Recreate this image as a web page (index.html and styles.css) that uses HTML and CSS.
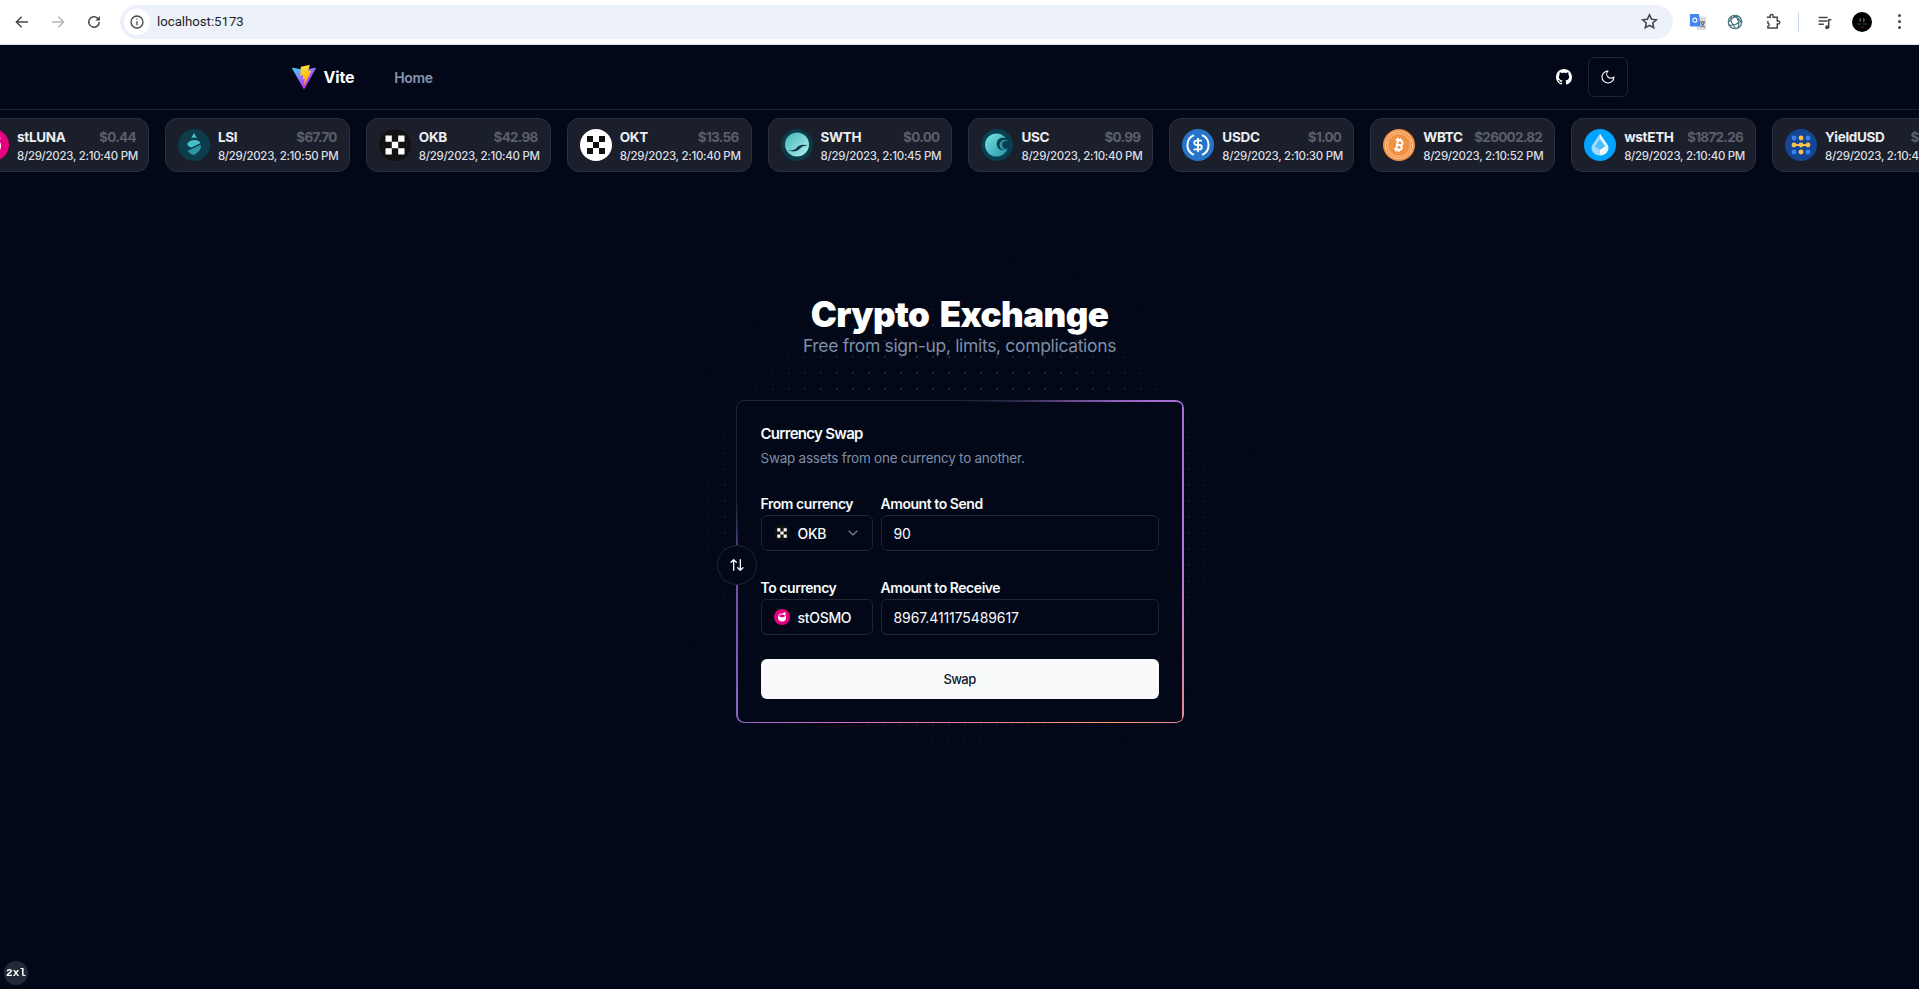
FILE: index.html
```html
<!DOCTYPE html>
<html lang="en">
<head>
<meta charset="utf-8">
<title>Crypto Exchange</title>
<link rel="stylesheet" href="styles.css">
</head>
<body>
<div class="chrome">
  <div class="chrome-btn"><svg class="ci" viewBox="0 0 24 24"><path d="M20 12H5M11.5 5 4.5 12l7 7"/></svg></div>
  <div class="chrome-btn faded"><svg class="ci" viewBox="0 0 24 24"><path d="M4 12h15M12.5 5l7 7-7 7"/></svg></div>
  <div class="chrome-btn"><svg class="ci" viewBox="0 0 24 24"><path d="M19 12a7 7 0 1 1-2.2-5.1L19 9"/><path class="fill" d="M19.8 4v6h-6z"/></svg></div>
  <div class="omnibox">
    <div class="site-info"><svg class="ci small" viewBox="0 0 24 24"><circle cx="12" cy="12" r="9"/><path d="M12 11v6M12 7v1.6"/></svg></div>
    <span class="url">localhost:5173</span>
    <svg class="ci star" viewBox="0 0 24 24"><path d="m12 3.5 2.6 5.6 6 .7-4.5 4.1 1.2 6L12 16.900l-5.300 3 1.200-6-4.500-4.100 6-.7z"/></svg>
  </div>
  <div class="chrome-right">
    <div class="chrome-btn"><svg class="ext" viewBox="0 0 20 20"><path fill="#dadce0" d="M8 4h10a1 1 0 0 1 1 1v13a1 1 0 0 1-1 1H9z"/><path fill="#4285f4" d="M2 1h9l2 14H2a1 1 0 0 1-1-1V2a1 1 0 0 1 1-1z"/><circle cx="6.500" cy="8" r="2.300" fill="none" stroke="#fff" stroke-width="1.200"/><path fill="none" stroke="#5f6368" stroke-width="1.300" d="M12 10h6M15 9v1M13.500 16c2-1.500 3-3.500 3.500-6M13.500 11c.8 2 2 3.500 4 4.500"/></svg></div>
    <div class="chrome-btn"><svg class="ext" viewBox="0 0 20 20" fill="none" stroke="#40717c" stroke-width="1.300"><circle cx="10" cy="10" r="7.500"/><path d="M6 3.500c-1.500 4 .5 9 4.500 13M14.500 4c-4-.8-8 1.500-11.500 6M17 11c-1.500-3.500-5-6.500-9-7.500M13 17c1.500-3 1.500-7-.5-11M3 13c3 1 8 .5 12-3"/></svg></div>
    <div class="chrome-btn"><svg class="ci" viewBox="0 0 24 24"><path d="M5 5.500h4.500V4a2 2 0 0 1 4 0v1.500H19v5h1.300a2 2 0 0 1 0 4H19V20H6.500v-2.200a2.200 2.200 0 0 0 0-4.300V10.500"/></svg></div>
    <div class="chrome-sep"></div>
    <div class="chrome-btn"><svg class="ci" viewBox="0 0 24 24"><path d="M3.500 6h12M3.500 10.500h12M3.500 15h7"/><path d="M17 19.500V9h3.500"/><circle class="fill" cx="14.800" cy="19" r="2.600"/></svg></div>
    <div class="chrome-btn"><span class="avatar"><svg viewBox="0 0 20 20"><path fill="none" stroke="#cfcfcf" stroke-width=".8" d="M8.500 6.500 7.800 8l.7 1.500M11.500 6.500l.7 1.500-.7 1.500"/><path stroke="#2c6b55" stroke-width=".8" d="M5 12h4M10.500 12H15"/><path stroke="#8a2b2b" stroke-width=".8" d="M8 15h4"/></svg></span></div>
    <div class="chrome-btn"><span class="kebab"><i></i><i></i><i></i></span></div>
  </div>
</div>

<header class="nav">
  <div class="nav-inner">
    <a class="brand">
      <svg class="vite" viewBox="0 0 256 257"><defs><linearGradient id="va" x1="-.828%" x2="57.636%" y1="7.652%" y2="78.411%"><stop offset="0%" stop-color="#41D1FF"/><stop offset="100%" stop-color="#BD34FE"/></linearGradient><linearGradient id="vb" x1="43.376%" x2="50.316%" y1="2.242%" y2="89.03%"><stop offset="0%" stop-color="#FFEA83"/><stop offset="8.333%" stop-color="#FFDD35"/><stop offset="100%" stop-color="#FFA800"/></linearGradient></defs><path fill="url(#va)" d="M255.153 37.938 134.897 252.976c-2.483 4.44-8.862 4.466-11.382.048L.875 37.958c-2.746-4.814 1.371-10.646 6.827-9.67l120.385 21.517a6.537 6.537 0 0 0 2.322-.004l117.867-21.483c5.438-.991 9.574 4.796 6.877 9.62Z"/><path fill="url(#vb)" d="M185.432.063 96.44 17.501a3.268 3.268 0 0 0-2.634 3.014l-5.474 92.456a3.268 3.268 0 0 0 3.997 3.378l24.777-5.718c2.318-.535 4.413 1.507 3.936 3.838l-7.361 36.047c-.495 2.426 1.782 4.5 4.151 3.78l15.304-4.649c2.372-.72 4.652 1.36 4.15 3.788l-11.698 56.621c-.732 3.542 3.979 5.473 5.943 2.437l1.313-2.028 72.516-144.72c1.215-2.423-.88-5.186-3.54-4.672l-25.505 4.922c-2.396.462-4.435-1.77-3.759-4.114l16.646-57.705c.677-2.35-1.37-4.583-3.769-4.113Z"/></svg>
      <span>Vite</span>
    </a>
    <a class="nav-link">Home</a>
    <div class="nav-actions">
      <div class="icon-btn plain"><svg class="gh" viewBox="0 0 16 16"><path fill="#fff" d="M8 0C3.58 0 0 3.58 0 8c0 3.54 2.29 6.53 5.47 7.59.4.07.55-.17.55-.38 0-.19-.01-.82-.01-1.49-2.01.37-2.53-.49-2.69-.94-.09-.23-.48-.94-.82-1.13-.28-.15-.68-.52-.01-.53.63-.01 1.08.58 1.23.82.72 1.21 1.87.87 2.33.66.07-.52.28-.87.51-1.07-1.78-.2-3.64-.89-3.64-3.95 0-.87.31-1.59.82-2.15-.08-.2-.36-1.02.08-2.12 0 0 .67-.21 2.2.82.64-.18 1.32-.27 2-.27.68 0 1.36.09 2 .27 1.53-1.04 2.2-.82 2.2-.82.44 1.1.16 1.92.08 2.12.51.56.82 1.27.82 2.15 0 3.07-1.87 3.75-3.65 3.95.29.25.54.73.54 1.48 0 1.07-.01 1.93-.01 2.2 0 .21.15.46.55.38A8.013 8.013 0 0016 8c0-4.42-3.58-8-8-8z"/></svg></div>
      <div class="icon-btn"><svg class="moon" viewBox="0 0 24 24"><path d="M12 3a6 6 0 0 0 9 9 9 9 0 1 1-9-9Z"/></svg></div>
    </div>
  </div>
</header>

<section class="ticker">
  <div class="ticker-track">
    <article class="tile">
      <svg class="coin" viewBox="0 0 32 32"><circle cx="16" cy="16" r="16" fill="#e5007d"/><circle cx="16" cy="17" r="8" fill="#fff"/><path fill="#e5007d" d="M10 14.500c3 2.500 9 2.500 12 0 0-2-2-3.500-6-3.500s-6 1.500-6 3.500z"/><circle cx="21" cy="9" r="2.400" fill="#fff"/></svg>
      <div class="tile-body"><div class="tile-top"><span class="sym">stLUNA</span><span class="price">$0.44</span></div><div class="date">8/29/2023, 2:10:40 PM</div></div>
    </article>
    <article class="tile">
      <svg class="coin" viewBox="0 0 32 32"><circle cx="16" cy="16" r="16" fill="#0d3c4b"/><path fill="#4cc3cc" d="M16 4l3 5.200c-1.900-.8-4.100-.8-6 0z"/><path fill="#45c0c8" d="M10.500 13c3-2.600 8-2.800 11-.6l.8 1.800-8.900 4.300c-1.500-.5-3.200-1.200-3.700-2.300-.4-1-.3-2.200.8-3.200z"/><path fill="#2e96a3" d="M22.600 15.800c.8 2.400.2 4.900-1.900 6.800-1.300 1.200-3 2.300-4.700 3.400-2.700-.6-5.200-2.300-6.200-4.300z"/></svg>
      <div class="tile-body"><div class="tile-top"><span class="sym">LSI</span><span class="price">$67.70</span></div><div class="date">8/29/2023, 2:10:50 PM</div></div>
    </article>
    <article class="tile">
      <svg class="coin" viewBox="0 0 32 32"><circle cx="16" cy="16" r="16" fill="#121212"/><path fill="#fff" d="M6.500 6.500h6.300v6.300H6.500zM19.200 6.500h6.300v6.300h-6.300zM12.800 12.800h6.400v6.400h-6.400zM6.500 19.200h6.300v6.300H6.500zM19.200 19.200h6.300v6.300h-6.300z"/></svg>
      <div class="tile-body"><div class="tile-top"><span class="sym">OKB</span><span class="price">$42.98</span></div><div class="date">8/29/2023, 2:10:40 PM</div></div>
    </article>
    <article class="tile">
      <svg class="coin" viewBox="0 0 32 32"><circle cx="16" cy="16" r="16" fill="#fff"/><path fill="#111" d="M7 7h6v6H7zM19 7h6v6h-6zM13 13h6v6h-6zM7 19h6v6H7zM19 19h6v6h-6z"/></svg>
      <div class="tile-body"><div class="tile-top"><span class="sym">OKT</span><span class="price">$13.56</span></div><div class="date">8/29/2023, 2:10:40 PM</div></div>
    </article>
    <article class="tile">
      <svg class="coin" viewBox="0 0 32 32"><defs><linearGradient id="sw" x1="0" y1="0" x2="1" y2="1"><stop offset="0" stop-color="#3fb6b8"/><stop offset="1" stop-color="#b6f1f0"/></linearGradient></defs><circle cx="16" cy="16" r="16" fill="#0c3a47"/><circle cx="16" cy="15.500" r="12" fill="url(#sw)"/><path fill="#0c3a47" d="M6 21c4 1.500 8-.2 10-2.500s6-3.500 11-2c-3.500 0-6.500 1-8.500 3.500s-7 3.500-12.500 1z"/></svg>
      <div class="tile-body"><div class="tile-top"><span class="sym">SWTH</span><span class="price">$0.00</span></div><div class="date">8/29/2023, 2:10:45 PM</div></div>
    </article>
    <article class="tile">
      <svg class="coin" viewBox="0 0 32 32"><defs><linearGradient id="us" x1="0" y1="0" x2="1" y2="1"><stop offset="0" stop-color="#79e6e2"/><stop offset="1" stop-color="#2596a8"/></linearGradient></defs><circle cx="16" cy="16" r="16" fill="#0b3f50"/><circle cx="15.500" cy="16" r="11.500" fill="url(#us)"/><path fill="#0b3f50" d="M28 11.500a7 7 0 0 0-11.500 0c-1.500 2.800-1 6.500 1.500 8.500 3 2.200 7.500 1.500 10-1.500z"/><path fill="#2a9cad" d="M27 12.500c-2-1.800-5-2-7 0a5 5 0 0 0 0 7c2 1.800 5 1.800 7 0-1.800.8-4 .5-5-1-1.200-1.600-1.200-3.700 0-5.200 1.200-1.400 3.300-1.600 5-.8z"/></svg>
      <div class="tile-body"><div class="tile-top"><span class="sym">USC</span><span class="price">$0.99</span></div><div class="date">8/29/2023, 2:10:40 PM</div></div>
    </article>
    <article class="tile">
      <svg class="coin" viewBox="0 0 32 32"><circle cx="16" cy="16" r="16" fill="#2775ca"/><path fill="none" stroke="#fff" stroke-width="2" d="M12 6.200a10.600 10.600 0 0 0 0 19.600M20 6.200a10.600 10.600 0 0 1 0 19.600"/><g transform="translate(8.500 8.500) scale(.625)"><path fill="none" stroke="#fff" stroke-width="3" stroke-linecap="round" d="M12 2v20M17 5H9.500a3.500 3.500 0 0 0 0 7h5a3.500 3.500 0 0 1 0 7H6"/></g></svg>
      <div class="tile-body"><div class="tile-top"><span class="sym">USDC</span><span class="price">$1.00</span></div><div class="date">8/29/2023, 2:10:30 PM</div></div>
    </article>
    <article class="tile">
      <svg class="coin" viewBox="0 0 32 32"><circle cx="16" cy="16" r="16" fill="#f09242"/><circle cx="16" cy="16" r="13.500" fill="none" stroke="#fbe3cd" stroke-width="1" stroke-dasharray="2 .6"/><circle cx="16" cy="16" r="11.500" fill="none" stroke="#fbe3cd" stroke-width=".6"/><g transform="translate(8 8) scale(.667)"><path fill="none" stroke="#fff" stroke-width="3" stroke-linecap="round" stroke-linejoin="round" d="M11.767 19.089c4.924.868 6.14-6.025 1.216-6.894m-1.216 6.894L5.860 18.047m5.908 1.042-.347 1.970m1.563-8.864c4.924.869 6.140-6.025 1.215-6.893m-1.215 6.893-3.940-.694m5.155-6.200L8.290 4.260m5.908 1.042.348-1.970M7.480 20.364l3.126-17.727"/></g></svg>
      <div class="tile-body"><div class="tile-top"><span class="sym">WBTC</span><span class="price">$26002.82</span></div><div class="date">8/29/2023, 2:10:52 PM</div></div>
    </article>
    <article class="tile">
      <svg class="coin" viewBox="0 0 32 32"><circle cx="16" cy="16" r="16" fill="#00a3ff"/><path fill="#9fdcff" d="M16 4.500 8 16.500c-2 5 2.500 10 8 10z"/><path fill="#e3f5ff" d="M16 4.500l8 12c2 5-2.500 10-8 10z"/><path fill="#4fc0ff" d="M16 10l5.500 7.500L16 21l-5.500-3.500z"/><path fill="#fff" d="M16 21l5.500-3.500c.5 3-2 6-5.500 7z"/></svg>
      <div class="tile-body"><div class="tile-top"><span class="sym">wstETH</span><span class="price">$1872.26</span></div><div class="date">8/29/2023, 2:10:40 PM</div></div>
    </article>
    <article class="tile">
      <svg class="coin" viewBox="0 0 32 32"><circle cx="16" cy="16" r="16" fill="#164693"/><g fill="#3b82f6"><circle cx="9" cy="9" r="2.400"/><circle cx="23" cy="9" r="2.400"/><circle cx="9" cy="23" r="2.400"/><circle cx="23" cy="23" r="2.400"/></g><g fill="#fbbf4b"><circle cx="16" cy="9" r="2.400"/><circle cx="16" cy="23" r="2.400"/><circle cx="9" cy="16" r="2.400"/><circle cx="16" cy="16" r="2.400"/><circle cx="23" cy="16" r="2.400"/><path d="M9 15h14v2H9z"/></g></svg>
      <div class="tile-body"><div class="tile-top"><span class="sym">YieldUSD</span><span class="price">$1.00</span></div><div class="date">8/29/2023, 2:10:40 PM</div></div>
    </article>
  </div>
</section>

<div class="dots"></div>

<main class="main">
  <h1 class="title">Crypto Exchange</h1>
  <p class="subtitle">Free from sign-up, limits, complications</p>

  <section class="card">
    <div class="beam"></div>
    <div class="swap-toggle"><svg class="swap-icon" viewBox="0 0 24 24"><path d="m21 16-4 4-4-4M17 20V4M3 8l4-4 4 4M7 4v16"/></svg></div>
    <h2 class="card-title">Currency Swap</h2>
    <p class="card-desc">Swap assets from one currency to another.</p>
    <form class="form">
      <div class="row">
        <div class="field select-field">
          <label class="label">From currency</label>
          <div class="select">
            <svg class="sel-icon" viewBox="0 0 32 32"><circle cx="16" cy="16" r="16" fill="#121212"/><path fill="#fff" d="M6.500 6.500h6.300v6.300H6.500zM19.200 6.500h6.300v6.300h-6.300zM12.800 12.800h6.400v6.400h-6.400zM6.500 19.200h6.300v6.300H6.500zM19.200 19.200h6.300v6.300h-6.300z"/></svg>
            <span class="sel-text">OKB</span>
            <svg class="chev" viewBox="0 0 24 24"><path d="m6 9 6 6 6-6"/></svg>
          </div>
        </div>
        <div class="field amount-field">
          <label class="label">Amount to Send</label>
          <input class="input" type="text" value="90">
        </div>
      </div>
      <div class="row">
        <div class="field select-field">
          <label class="label">To currency</label>
          <div class="select">
            <svg class="sel-icon" viewBox="0 0 32 32"><circle cx="16" cy="16" r="16" fill="#e5007d"/><circle cx="16" cy="17" r="8" fill="#fff"/><path fill="#e5007d" d="M10 14.500c3 2.500 9 2.500 12 0 0-2-2-3.500-6-3.500s-6 1.500-6 3.500z"/><circle cx="21" cy="9" r="2.400" fill="#fff"/></svg>
            <span class="sel-text">stOSMO</span>
          </div>
        </div>
        <div class="field amount-field">
          <label class="label">Amount to Receive</label>
          <input class="input" type="text" value="8967.411175489617">
        </div>
      </div>
      <button class="submit" type="button">Swap</button>
    </form>
  </section>
</main>

<div class="indicator">2xl</div>
</body>
</html>
```
FILE: styles.css
```css
* { box-sizing: border-box; }
html, body { margin: 0; height: 989px; overflow: hidden; background: #020817; }
body { font-family: Inter, "Noto Sans", sans-serif; color: #f8fafc; position: relative; }

/* browser toolbar */
.chrome { height: 45px; background: #fff; border-bottom: 1px solid #dfe1e5; display: flex; align-items: center; padding: 0 2px 1px 4px; }
.chrome-btn { width: 36px; height: 36px; display: flex; align-items: center; justify-content: center; flex: none; }
.chrome-btn.faded { opacity: .4; }
.ci { width: 18px; height: 18px; fill: none; stroke: #474747; stroke-width: 2; }
.ci .fill { fill: #474747; stroke: none; }
.ci.small { width: 16px; height: 16px; stroke-width: 2; }
.ext { width: 18px; height: 18px; }
.omnibox { flex: 1; height: 34px; margin: 0 7px 0 8px; background: #edf2fa; border-radius: 17px; display: flex; align-items: center; padding-left: 4px; padding-right: 14px; }
.site-info { width: 26px; height: 26px; border-radius: 50%; background: #fff; display: flex; align-items: center; justify-content: center; }
.url { margin-left: 7px; font: 13.2px/20px Roboto, sans-serif; color: #1f1f1f; }
.star { margin-left: auto; width: 19px; height: 19px; }
.chrome-right { display: flex; align-items: center; flex: none; }
.chrome-right .chrome-btn + .chrome-btn { margin-left: 1px; }
.chrome-sep { width: 1px; height: 20px; background: #c9d7ee; margin: 0 8px; flex: none; }
.avatar { width: 20px; height: 20px; border-radius: 50%; background: #000; display: block; overflow: hidden; }
.avatar svg { display: block; width: 20px; height: 20px; }
.kebab { display: flex; flex-direction: column; gap: 3px; }
.kebab i { display: block; width: 3px; height: 3px; border-radius: 50%; background: #474747; }

/* nav */
.nav { height: 65px; border-bottom: 1px solid #1c2331; }
.nav-inner { max-width: 1400px; height: 64px; margin: 0 auto; padding: 0 32px; display: flex; align-items: center; }
.brand { display: flex; align-items: center; gap: 8px; font-size: 16px; font-weight: 700; letter-spacing: -.2px; color: #fff; }
.vite { width: 24px; height: 24px; display: block; }
.nav-link { margin-left: 40px; font-size: 14px; font-weight: 600; letter-spacing: -.35px; color: #8796b0; }
.nav-actions { margin-left: auto; display: flex; gap: 4px; }
.icon-btn { width: 40px; height: 40px; border: 1px solid #1e2533; border-radius: 6px; display: flex; align-items: center; justify-content: center; }
.icon-btn.plain { border-color: transparent; }
.gh { width: 16px; height: 16px; }
.moon { width: 16px; height: 16px; fill: none; stroke: #fff; stroke-width: 1.600; stroke-linecap: round; stroke-linejoin: round; }

/* ticker */
.ticker { padding-top: 8px; overflow: hidden; }
.ticker-track { display: flex; gap: 16px; margin-left: -36px; width: max-content; }
.tile { width: 184.900px; height: 54px; flex: none; display: flex; align-items: center; gap: 8px; padding: 0 12px; background: #1a1f2b; border: 1px solid #2a2f3b; border-radius: 12px; }
.coin { width: 32px; height: 32px; flex: none; display: block; }
.tile-body { flex: 1; min-width: 0; margin-top: 2px; }
.tile-top { display: flex; justify-content: space-between; height: 20px; line-height: 20px; white-space: nowrap; }
.sym { font-size: 13.500px; font-weight: 700; letter-spacing: -.3px; color: #eceef1; }
.price { font-size: 13.500px; font-weight: 700; letter-spacing: -.7px; color: #5b5f69; }
.date { font-size: 11.500px; font-weight: 500; line-height: 18px; letter-spacing: -.3px; color: #dcdee2; white-space: nowrap; }

/* decorative dot field */
.dots { position: absolute; left: 656px; top: 256px; width: 608px; height: 528px; background-image: radial-gradient(circle, #1f2635 0.8px, transparent 1.1px); background-size: 16px 16px; background-position: -3px -3px; -webkit-mask-image: radial-gradient(ellipse 50% 50% at center, #000 62%, transparent 100%); mask-image: radial-gradient(ellipse 50% 50% at center, #000 62%, transparent 100%); }

/* main */
.main { position: relative; padding-top: 120px; display: flex; flex-direction: column; align-items: center; }
.title { margin: 2px 0 -2px; font-size: 35px; line-height: 40px; font-weight: 900; letter-spacing: -.6px; word-spacing: 4px; color: #fff; }
.subtitle { margin: 0; font-size: 17.500px; line-height: 28px; letter-spacing: -.33px; color: #7f8ea6; }
.card { position: relative; width: 448px; margin-top: 40px; padding: 25px 24px 23px; border: 1px solid #1e2533; border-radius: 8px; background: #020817; }
.beam { position: absolute; inset: -1px; border-radius: 8px; padding: 1.500px; background: conic-gradient(from 0deg at 50% 50%, transparent 0deg, #2c2848 20deg, #a56bd2 50deg, #b675d8 90deg, #f08a90 130deg, #f59a6e 136deg, #ea7aa0 180deg, #c76fd0 225deg, #8b62c4 236deg, #6a4fa0 268deg, transparent 285deg, transparent 360deg); -webkit-mask: linear-gradient(#000 0 0) content-box, linear-gradient(#000 0 0); -webkit-mask-composite: xor; mask: linear-gradient(#000 0 0) content-box exclude, linear-gradient(#000 0 0); pointer-events: none; }
.swap-toggle { position: absolute; left: -20px; top: 144px; width: 40px; height: 40px; border-radius: 50%; border: 1px solid #1e2533; background: #020817; display: flex; align-items: center; justify-content: center; }
.swap-icon { width: 16px; height: 16px; fill: none; stroke: #f8fafc; stroke-width: 2; stroke-linecap: round; stroke-linejoin: round; }
.card-title { margin: 0; font-size: 15px; line-height: 16px; font-weight: 600; letter-spacing: -.7px; color: #f8fafc; }
.card-desc { margin: 6px 0 0; font-size: 13.500px; line-height: 20px; letter-spacing: -.25px; color: #7f8ea6; }
.form { margin-top: 24px; display: flex; flex-direction: column; }
.row { display: flex; gap: 8px; margin-bottom: 25px; }
.row + .row { margin-bottom: 24px; }
.field { display: flex; flex-direction: column; }
.select-field { width: 112px; flex: none; }
.amount-field { flex: 1; min-width: 0; }
.label { font-size: 14px; line-height: 23px; font-weight: 600; letter-spacing: -.45px; color: #f8fafc; white-space: nowrap; }
.select { height: 36px; border: 1px solid #1e2533; border-radius: 6px; padding: 0 11px 0 12px; display: flex; align-items: center; gap: 8px; font-size: 14px; font-weight: 500; letter-spacing: -.3px; color: #f8fafc; overflow: hidden; }
.sel-icon { width: 16px; height: 16px; flex: none; }
.sel-text { white-space: nowrap; }
.chev { width: 16px; height: 16px; margin-left: auto; flex: none; fill: none; stroke: #f8fafc; stroke-width: 1.600; stroke-linecap: round; stroke-linejoin: round; opacity: .5; }
.input { width: 100%; height: 36px; border: 1px solid #1e2533; border-radius: 6px; background: transparent; padding: 0 12px; font: 400 14px Inter, sans-serif; letter-spacing: -.1px; color: #f8fafc; outline: none; }
.submit { width: 100%; height: 40px; border: 0; border-radius: 6px; background: #f8fafc; color: #0f172a; font: 500 13px Inter, sans-serif; letter-spacing: -.6px; }

.indicator { position: fixed; left: 4px; bottom: 4px; width: 24px; height: 24px; border-radius: 50%; background: #1f2937; color: #fff; display: flex; align-items: center; justify-content: center; font: 700 11px "Liberation Mono", monospace; }
```
